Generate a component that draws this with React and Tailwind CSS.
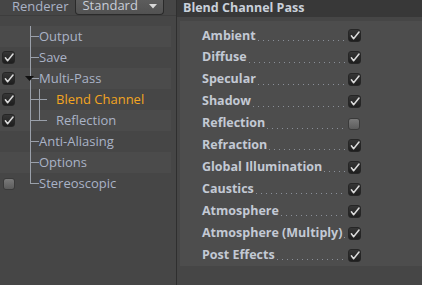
import React from 'react';

const font = { fontFamily: '"Open Sans", "DejaVu Sans", sans-serif' };

const Check = ({ on }) => (
    <span className="flex h-[13px] w-[13px] items-center justify-center rounded-[3px] border border-[#262626] bg-[linear-gradient(#363636,#1e1e1e)]">
        {on ? (
            <svg width="10" height="9" viewBox="0 0 10 9">
                <path d="M1.4 4.8 L3.6 7.8 L9 1" fill="none" stroke="#dcdcdc" strokeWidth="1.5" strokeLinecap="round" strokeLinejoin="round" />
            </svg>
        ) : null}
    </span>
);

const Empty = () => (
    <span className="block h-[12px] w-[12px] rounded-[3px] border border-[#3a3a3a] bg-[linear-gradient(#7a7a7a,#5c5c5c)]" />
);

const tree = [
    { label: 'Output', level: 0, check: null },
    { label: 'Save', level: 0, check: true },
    { label: 'Multi-Pass', level: 0, check: true, open: true },
    { label: 'Blend Channel', level: 1, check: true, active: true },
    { label: 'Reflection', level: 1, check: true, last: true },
    { label: 'Anti-Aliasing', level: 0, check: null },
    { label: 'Options', level: 0, check: null },
    { label: 'Stereoscopic', level: 0, check: false, last: true },
];

const passes = [
    ['Ambient', true],
    ['Diffuse', true],
    ['Specular', true],
    ['Shadow', true],
    ['Reflection', false],
    ['Refraction', true],
    ['Global Illumination', true],
    ['Caustics', true],
    ['Atmosphere', true],
    ['Atmosphere (Multiply)', true],
    ['Post Effects', true],
];

const TreeRow = ({ item, index }) => (
    <div className={`flex h-[21px] items-center ${index % 2 === 0 ? 'bg-[#4b4b4b]' : ''}`}>
        <div className="flex w-[17px] justify-center">
            {item.check === true && <Check on />}
            {item.check === false && <Empty />}
        </div>
        <div className="relative ml-[7px] h-full w-[7px]">
            <div className={`absolute left-[6px] top-0 w-px bg-[#9aa0aa] ${item.last && item.level === 0 ? 'h-[11px]' : 'h-full'}`} />
            <div className="absolute left-[6px] top-[10px] h-px w-[9px] bg-[#9aa0aa]" />
            {item.open && (
                <svg className="absolute left-[1px] top-[8px]" width="9" height="6" viewBox="0 0 9 6">
                    <path d="M0 0 H9 L4.5 5 Z" fill="#111" />
                </svg>
            )}
        </div>
        {item.level === 1 && (
            <div className="relative ml-[8px] h-full w-[9px]">
                <div className={`absolute left-0 top-0 w-px bg-[#9aa0aa] ${item.last ? 'h-[11px]' : 'h-full'}`} />
                <div className="absolute left-0 top-[10px] h-px w-[8px] bg-[#9aa0aa]" />
            </div>
        )}
        <span className={`ml-[8px] text-[13px] ${item.active ? 'text-[#f3a521]' : 'text-[#aab3c6]'}`}>
            {item.label}
        </span>
    </div>
);

const PassRow = ({ label, on }) => (
    <div className="flex h-[22px] items-center pl-[22px]">
        <span className="text-[12.5px] font-bold text-[#c3c9d4]">{label}</span>
        <div className="mx-[2px] mt-[9px] h-px flex-1 bg-[linear-gradient(to_right,#8a8f98_1px,transparent_1px)] bg-[length:5px_1px] bg-repeat-x" />
        <div className="w-[14px]">{on ? <Check on /> : <Empty />}</div>
        <div className="w-[60px]" />
    </div>
);

export default function App() {
    return (
        <div className="flex h-[285px] w-[422px] overflow-hidden bg-[#464646]" style={font}>
            <div className="flex w-[177px] flex-col border-r border-[#2f2f2f]">
                <div className="flex h-[15px] items-end gap-[7px] overflow-hidden pl-[12px]">
                    <span className="mb-[1px] text-[13px] leading-[16px] text-[#aab3c6]">Renderer</span>
                    <div className="flex h-[15px] w-[89px] items-end justify-between rounded-b-[4px] border border-t-0 border-[#2a2a2a] bg-[linear-gradient(#5c5c5c,#525252)] px-[6px]">
                        <span className="mb-[1px] text-[13px] leading-[16px] text-[#c9ced8]">Standard</span>
                        <svg className="mb-[5px]" width="8" height="5" viewBox="0 0 8 5">
                            <path d="M0 0 H8 L4 4.5 Z" fill="#d8d8d8" />
                        </svg>
                    </div>
                </div>
                <div className="h-[11px] border-t border-[#3d3d3d]" />
                <div className="mr-[5px] flex flex-col">
                    {tree.map((item, i) => (
                        <TreeRow key={item.label + i} item={item} index={i} />
                    ))}
                </div>
            </div>
            <div className="flex flex-1 flex-col">
                <div className="flex h-[17px] items-center bg-[#383838] pl-[6px]">
                    <span className="text-[12.5px] font-bold text-[#c9d0da]">Blend Channel Pass</span>
                </div>
                <div className="ml-[3px] mt-[4px] flex h-[245px] flex-col bg-[#4d4d4d] pt-[4px]">
                    {passes.map(([label, on]) => (
                        <PassRow key={label} label={label} on={on} />
                    ))}
                </div>
            </div>
        </div>
    );
}
